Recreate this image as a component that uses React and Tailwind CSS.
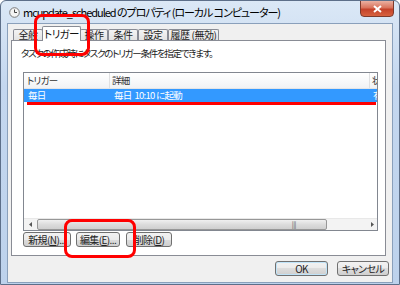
import React from "react";

const btn =
  "flex items-center justify-center shrink-0 whitespace-nowrap h-[15px] border border-[#707070] rounded-[3px] bg-[linear-gradient(#f2f2f2,#ebebeb_50%,#dddddd_50%,#cfcfcf)] text-[10px] leading-none text-[#222] tracking-[-0.6px]";

function Tab({ label, w, selected }) {
  if (selected) {
    return (
      <div
        className={`${w} shrink-0 whitespace-nowrap h-[15px] -mb-[1px] -mx-[1px] relative z-10 bg-white border border-b-0 border-[#898c95] rounded-t-[2px] flex items-center justify-center text-[10.5px] leading-none text-[#111] tracking-[-0.6px]`}
      >
        {label}
      </div>
    );
  }
  return (
    <div
      className={`${w} shrink-0 whitespace-nowrap h-[11px] bg-[linear-gradient(#f4f4f4,#e3e3e3)] border border-b-0 border-[#898c95] rounded-t-[2px] flex items-center justify-center text-[10px] leading-none text-[#222] tracking-[-0.4px]`}
    >
      {label}
    </div>
  );
}

export default function App() {
  return (
    <div className="w-[400px] h-[285px] relative overflow-hidden bg-[linear-gradient(#dbe8f6,#c4d7ef_30%,#bdd2ec)] border border-[#5d6f89] rounded-t-[6px] flex flex-col font-['Noto_Sans_CJK_JP',sans-serif] [font-feature-settings:'palt']">
      {/* title bar */}
      <div className="h-[22px] flex items-center pl-[8px] relative">
        <svg width="11" height="11" viewBox="0 0 11 11">
          <circle cx="5.5" cy="5.5" r="4.8" fill="#f4f4f4" stroke="#7a7a7a" strokeWidth="1" />
          <path d="M5.5 2.5V5.5H8" stroke="#444" strokeWidth="1" fill="none" />
        </svg>
        <span className="ml-[3px] text-[11px] leading-none text-black tracking-[-1.05px] whitespace-nowrap">
          mcupdate_scheduled のプロパティ (ローカル コンピューター)
        </span>
        <div className="absolute top-[-1px] right-[5px] w-[34px] h-[17px] rounded-b-[4px] border border-[#7d3a2c] bg-[linear-gradient(#eab0a1,#d9735c_45%,#c4422a_55%,#d7623f)] flex items-center justify-center">
          <svg width="9" height="8" viewBox="0 0 9 8">
            <path d="M1 1L8 7M8 1L1 7" stroke="#fff" strokeWidth="2" />
          </svg>
        </div>
      </div>

      {/* client area */}
      <div className="flex-1 ml-[6px] mr-[6px] mb-[1px] bg-[#f0f0f0] border border-[#8aa0bb] flex flex-col">
        {/* tabs */}
        <div className="h-[16px] flex items-end pl-[5px]">
          <Tab label="全般" w="w-[30px]" />
          <Tab label="トリガー" w="w-[39px]" selected />
          <Tab label="操作" w="w-[28px]" />
          <Tab label="条件" w="w-[30px]" />
          <Tab label="設定" w="w-[30px]" />
          <Tab label="履歴 (無効)" w="w-[51px]" />
        </div>
        {/* panel */}
        <div className="ml-[3px] mr-[6px] h-[216px] bg-white border border-[#898c95] flex flex-col">
          <div className="pl-[9px] pt-[6px] text-[9.5px] leading-[12px] text-[#222] tracking-[-1.3px] whitespace-nowrap">
            タスクの作成時にタスクのトリガー条件を指定できます。
          </div>
          <div className="ml-[11px] mt-[13px] w-[355px] h-[159px] border border-[#828790] flex flex-col overflow-hidden">
            {/* header */}
            <div className="h-[16px] flex bg-[linear-gradient(#ffffff,#f7f8f9_60%,#f1f2f4)] border-b border-[#e3e4e6] text-[9.5px] leading-none text-[#333] whitespace-nowrap tracking-[-0.8px]">
              <div className="w-[86px] shrink-0 pl-[3px] flex items-center border-r border-[#dfe0e2]">トリガー</div>
              <div className="w-[260px] shrink-0 pl-[2px] flex items-center border-r border-[#dfe0e2]">詳細</div>
              <div className="shrink-0 pl-[2px] flex items-center">状態</div>
            </div>
            {/* selected row */}
            <div className="h-[13px] flex bg-[#3399ff] text-white text-[9.5px] leading-none whitespace-nowrap tracking-[-0.7px]">
              <div className="w-[87px] shrink-0 pl-[4px] flex items-center">毎日</div>
              <div className="w-[260px] shrink-0 pl-[3px] flex items-center">毎日&nbsp;&nbsp;10:10 に起動</div>
              <div className="shrink-0 pl-[2px] flex items-center">有効</div>
            </div>
            <div className="flex-1" />
            {/* horizontal scrollbar */}
            <div className="h-[12px] flex bg-[#f3f3f3] border-t border-[#e8e8e8]">
              <div className="w-[13px] shrink-0 flex items-center justify-center">
                <svg width="4" height="5" viewBox="0 0 4 5">
                  <path d="M3 0V5L0 2.5Z" fill="#555" />
                </svg>
              </div>
              <div className="w-[290px] shrink-0 h-[11px] border border-[#979797] rounded-[2px] bg-[linear-gradient(#f0f0f0,#dcdcdc_50%,#cfcfcf)] flex items-center justify-end pr-[30px]">
                <span className="text-[7px] leading-none text-[#555] tracking-[-0.5px]">|||</span>
              </div>
              <div className="flex-1" />
              <div className="w-[11px] shrink-0 flex items-center justify-center">
                <svg width="4" height="5" viewBox="0 0 4 5">
                  <path d="M1 0V5L4 2.5Z" fill="#555" />
                </svg>
              </div>
            </div>
          </div>
          {/* buttons */}
          <div className="ml-[11px] mt-[1px] flex">
            <div className={`${btn} w-[48px]`}>新規(<u>N</u>)...</div>
            <div className={`${btn} w-[44px] ml-[5px]`}>編集(<u>E</u>)...</div>
            <div className={`${btn} w-[46px] ml-[6px]`}>削除(<u>D</u>)</div>
          </div>
        </div>
        {/* dialog buttons */}
        <div className="mt-[5px] flex justify-end pr-[3px]">
          <div className={`${btn} w-[53px] h-[14px] border-[#3c7fb1] shadow-[inset_0_0_0_1px_#bfe3f8]`}>OK</div>
          <div className={`${btn} w-[52px] h-[14px] ml-[9px]`}>キャンセル</div>
        </div>
      </div>

      {/* red annotations */}
      <div className="absolute left-[33px] top-[13px] w-[56px] h-[42px] border-[3px] border-[#ff0000] rounded-[8px]" />
      <div className="absolute left-[63px] top-[218px] w-[72px] h-[39px] border-[3px] border-[#ff0000] rounded-[8px]" />
      <div className="absolute left-[26px] top-[101px] w-[349px] h-[3px] bg-[#ff0000]" />
    </div>
  );
}
